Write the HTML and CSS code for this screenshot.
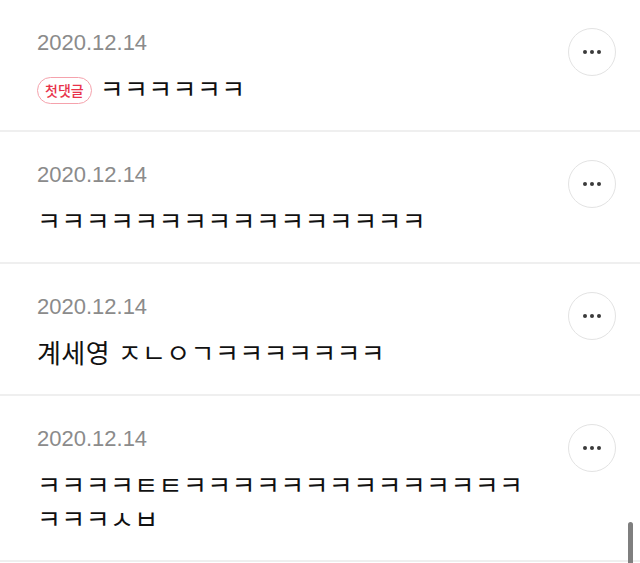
FILE: index.html
```html
<!DOCTYPE html>
<html lang="ko">
<head>
<meta charset="utf-8">
<link rel="stylesheet" href="styles.css">
</head>
<body>
<ul class="comments">
  <li class="comment">
    <div class="body">
      <div class="date">2020.12.14</div>
      <p class="text"><span class="badge">첫댓글</span>ㅋㅋㅋㅋㅋㅋ</p>
    </div>
    <button class="more" aria-label="더보기"><span></span><span></span><span></span></button>
  </li>
  <li class="comment">
    <div class="body">
      <div class="date">2020.12.14</div>
      <p class="text">ㅋㅋㅋㅋㅋㅋㅋㅋㅋㅋㅋㅋㅋㅋㅋㅋ</p>
    </div>
    <button class="more" aria-label="더보기"><span></span><span></span><span></span></button>
  </li>
  <li class="comment">
    <div class="body">
      <div class="date">2020.12.14</div>
      <p class="text">계세영 ㅈㄴㅇㄱㅋㅋㅋㅋㅋㅋㅋ</p>
    </div>
    <button class="more" aria-label="더보기"><span></span><span></span><span></span></button>
  </li>
  <li class="comment">
    <div class="body">
      <div class="date">2020.12.14</div>
      <p class="text">ㅋㅋㅋㅋㅌㅌㅋㅋㅋㅋㅋㅋㅋㅋㅋㅋㅋㅋㅋㅋㅋㅋㅋㅅㅂ</p>
    </div>
    <button class="more" aria-label="더보기"><span></span><span></span><span></span></button>
  </li>
</ul>
<div class="scrollbar"></div>
</body>
</html>
```

FILE: styles.css
```css
html, body {
  margin: 0;
  padding: 0;
  background: #fff;
  overflow: hidden;
}
body {
  font-family: "Noto Sans CJK KR", "Noto Sans", sans-serif;
  color: #111;
}
.comments {
  list-style: none;
  margin: 0;
  padding: 0;
}
.comment {
  display: flex;
  align-items: flex-start;
  gap: 40px;
  padding: 30px 24px 25px 37px;
  border-bottom: 2px solid #efefef;
}
.body {
  flex: 1;
  min-width: 0;
}
.date {
  font-family: "Liberation Sans", Arial, sans-serif;
  font-size: 22px;
  line-height: 26px;
  color: #8b8b8b;
}
.text {
  margin: 15px 0 0;
  font-size: 26px;
  font-weight: 400;
  line-height: 34px;
  letter-spacing: 0.4px;
  word-break: break-all;
  color: #111;
}
.badge {
  display: inline-flex;
  align-items: center;
  justify-content: center;
  box-sizing: border-box;
  height: 27px;
  padding: 0 7px;
  margin-right: 8px;
  border: 1px solid #f5a2ac;
  border-radius: 14px;
  color: #e8334b;
  font-size: 14px;
  font-weight: 500;
  line-height: 1;
  letter-spacing: 0;
  vertical-align: 3px;
}
.more {
  flex: none;
  width: 48px;
  height: 48px;
  margin-top: -2px;
  padding: 0;
  border: 1px solid #e3e3e3;
  border-radius: 50%;
  background: #fff;
  display: flex;
  align-items: center;
  justify-content: center;
  gap: 3px;
}
.more span {
  width: 4px;
  height: 4px;
  border-radius: 50%;
  background: #3a3a3a;
}
.scrollbar {
  position: fixed;
  left: 628px;
  top: 522px;
  width: 5px;
  height: 60px;
  border-radius: 3px;
  background: #7f7f7f;
}
```
